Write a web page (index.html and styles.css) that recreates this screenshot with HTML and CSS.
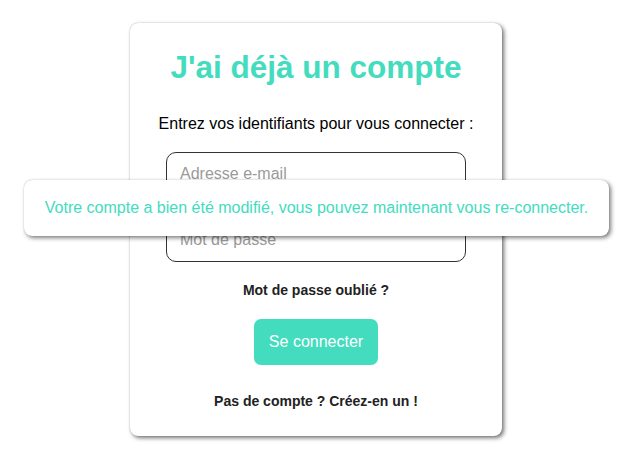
FILE: index.html
```html
<!DOCTYPE html>
<html lang="fr">
<head>
<meta charset="utf-8">
<title>Connexion</title>
<link rel="stylesheet" href="styles.css">
</head>
<body>
<main class="card">
  <h1 class="title">J'ai déjà un compte</h1>
  <p class="intro">Entrez vos identifiants pour vous connecter :</p>
  <div class="fields">
    <input class="field field-top" type="email" placeholder="Adresse e-mail">
    <input class="field field-bottom" type="password" placeholder="Mot de passe">
  </div>
  <a class="link forgot" href="#">Mot de passe oublié ?</a>
  <button class="btn" type="button">Se connecter</button>
  <a class="link signup" href="#">Pas de compte ? Créez-en un !</a>
</main>
<div class="toast">Votre compte a bien été modifié, vous pouvez maintenant vous re-connecter.</div>
</body>
</html>
```
FILE: styles.css
```css
html, body {
  margin: 0;
  padding: 0;
  background: #ffffff;
}
body {
  font-family: "Liberation Sans", Arial, sans-serif;
  display: flex;
  justify-content: center;
  align-items: flex-start;
  padding: 23px 4px 0 0;
  height: 464px;
  box-sizing: border-box;
  position: relative;
}
.card {
  width: 372px;
  box-sizing: border-box;
  padding: 24px 36px 26px;
  background: #fff;
  border-radius: 8px;
  box-shadow: 2px 2px 4px rgba(0, 0, 0, 0.55), 0 0 1px rgba(0, 0, 0, 0.35);
  display: flex;
  flex-direction: column;
  align-items: center;
}
.title {
  margin: 0;
  font-size: 31.5px;
  line-height: 40px;
  font-weight: bold;
  color: #43dcbe;
  text-align: center;
  white-space: nowrap;
}
.intro {
  margin: 27px 0 0;
  font-size: 16px;
  line-height: 20px;
  color: #000;
  text-align: center;
  white-space: nowrap;
}
.fields {
  margin-top: 18px;
  width: 100%;
  box-sizing: border-box;
  border: 1px solid #333;
  border-radius: 10px;
  display: flex;
  flex-direction: column;
  overflow: hidden;
}
.field {
  border: 0;
  outline: 0;
  background: transparent;
  font-family: "Liberation Sans", Arial, sans-serif;
  font-size: 16px;
  line-height: 20px;
  height: 20px;
  color: #333;
  margin: 0;
}
.field::placeholder {
  color: #9a9a9a;
}
.field-top {
  padding: 11px 13px 23px;
}
.field-bottom {
  padding: 23px 13px 11px;
}
.link {
  font-size: 14px;
  line-height: 18px;
  font-weight: bold;
  color: #222;
  text-decoration: none;
  text-align: center;
  white-space: nowrap;
}
.forgot {
  margin-top: 19px;
}
.btn {
  margin-top: 20px;
  border: 0;
  border-radius: 7px;
  background: #43dcbe;
  color: #fff;
  font-family: "Liberation Sans", Arial, sans-serif;
  font-size: 16px;
  line-height: 20px;
  padding: 13px 15px;
}
.signup {
  margin-top: 27px;
}
.toast {
  position: absolute;
  top: 180px;
  left: 24px;
  width: 585px;
  height: 56px;
  box-sizing: border-box;
  display: flex;
  align-items: center;
  justify-content: center;
  background: #fff;
  border-radius: 8px;
  box-shadow: 2px 2px 4px rgba(0, 0, 0, 0.5), 0 0 1px rgba(0, 0, 0, 0.3);
  color: #43dcbe;
  font-size: 16px;
  line-height: 20px;
  white-space: nowrap;
}
```
